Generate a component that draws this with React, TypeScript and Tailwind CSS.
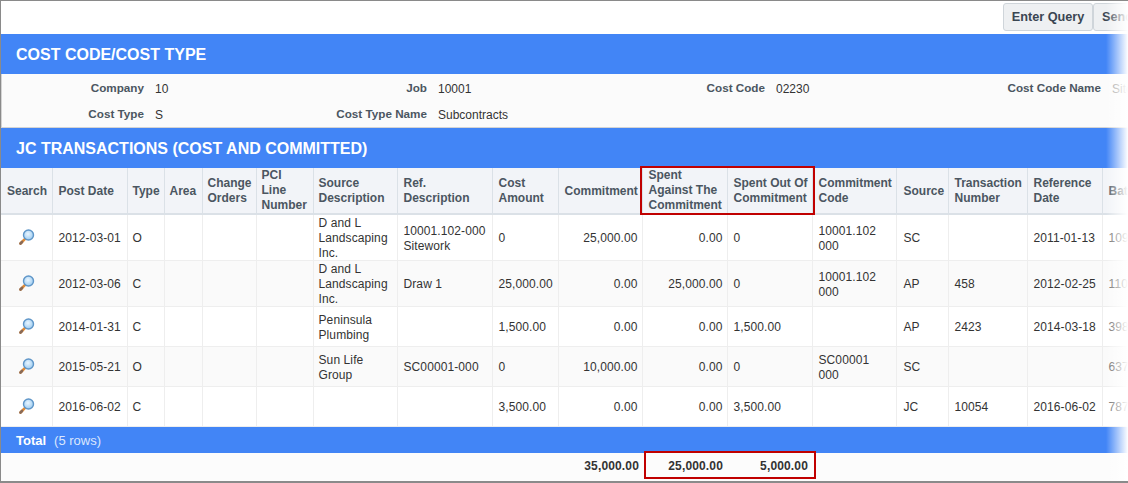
import React from "react";

const widths = [51, 75, 37, 38, 54, 57, 84, 95, 66, 84, 85, 85, 84, 52, 79, 75, 60];

const Lens = () => (
  <svg width="18" height="18" viewBox="0 0 18 18" className="mx-auto -mt-[2px] block">
    <defs>
      <radialGradient id="lensFill" cx="0.45" cy="0.4" r="0.7">
        <stop offset="0" stopColor="#eaf6ff" />
        <stop offset="1" stopColor="#8fc4ee" />
      </radialGradient>
    </defs>
    <path d="M2.5 15.5 L6.8 11.2" stroke="#e08a35" strokeWidth="2.6" strokeLinecap="round" />
    <path d="M2.5 15.5 L4 14" stroke="#8a6a55" strokeWidth="2.6" strokeLinecap="round" />
    <circle cx="10.5" cy="7" r="5" fill="url(#lensFill)" stroke="#5f96c8" strokeWidth="1.4" />
  </svg>
);

const rows: string[][] = [
  ["2012-03-01", "O", "", "", "", "D and L Landscaping Inc.", "10001.102-000 Sitework", "0", "25,000.00", "0.00", "0", "10001.102 000", "SC", "", "2011-01-13", "109"],
  ["2012-03-06", "C", "", "", "", "D and L Landscaping Inc.", "Draw 1", "25,000.00", "0.00", "25,000.00", "0", "10001.102 000", "AP", "458", "2012-02-25", "110"],
  ["2014-01-31", "C", "", "", "", "Peninsula Plumbing", "", "1,500.00", "0.00", "0.00", "1,500.00", "", "AP", "2423", "2014-03-18", "398"],
  ["2015-05-21", "O", "", "", "", "Sun Life Group", "SC00001-000", "0", "10,000.00", "0.00", "0", "SC00001 000", "SC", "", "", "637"],
  ["2016-06-02", "C", "", "", "", "", "", "3,500.00", "0.00", "0.00", "3,500.00", "", "JC", "10054", "2016-06-02", "787"],
];

const heads = [
  "Search", "Post Date", "Type", "Area", "Change Orders", "PCI Line Number", "Source Description", "Ref. Description",
  "Cost Amount", "Commitment", "Spent Against The Commitment", "Spent Out Of Commitment", "Commitment Code", "Source",
  "Transaction Number", "Reference Date", "Batch",
];

const singleLine = ["Search", "Post Date", "Type", "Area", "Commitment", "Source", "Batch"];

const Label = ({ children }: { children: React.ReactNode }) => (
  <div className="text-right text-[11.7px] font-bold text-[#4b5661] whitespace-nowrap">{children}</div>
);

const Value = ({ children, muted }: { children: React.ReactNode; muted?: boolean }) => (
  <div className={`pt-[2px] ${muted ? "text-[#999]" : ""}`}>{children}</div>
);

const SectionBar = ({ children }: { children: React.ReactNode }) => (
  <div className="h-10 bg-[#4285f6] pl-[15px] flex items-center text-[16px] font-bold text-white">{children}</div>
);

const cellPad = (i: number) => {
  if (i === 8 || i === 9) return "pl-[5px] pr-[4px] text-right";
  if (i === 11) return "pl-[6px] pr-[14px] text-left";
  if (i === 12) return "pl-[7px] pr-[3px] text-left";
  if (i === 0) return "pl-[6px] pr-[4px] text-left";
  if (i >= 6) return "pl-[6px] pr-[4px] text-left";
  return "px-[5px] text-left";
};

export default function App() {
  return (
    <div className="relative w-[1128px] h-[483px] overflow-hidden bg-white border-t border-b-2 border-l border-[#8a8a8a] font-['Liberation_Sans',Arial,sans-serif] text-[12px] leading-[15px] text-[#333]">
      <div className="h-[33px] flex pt-[2px] pl-[1002px]">
        <button className="h-7 w-[90px] shrink-0 rounded-[3px] border border-[#cfd5da] bg-[#eef0f2] text-[12.7px] font-bold text-[#3a4652]">Enter Query</button>
        <button className="h-7 w-[90px] shrink-0 rounded-[3px] border border-[#cfd5da] bg-[#eef0f2] pl-[8px] text-left text-[12.7px] font-bold text-[#3a4652]">Send</button>
      </div>
      <SectionBar>COST CODE/COST TYPE</SectionBar>
      <div className="h-[54px] bg-[#fbfbfb] border-b border-l border-[#d4d4d4] grid grid-cols-[142px_161px_100px_158px_158px_124px_190px_40px] gap-x-[11px] content-start pt-[6px] auto-rows-[26px] whitespace-nowrap">
        <Label>Company</Label><Value>10</Value>
        <Label>Job</Label><Value>10001</Value>
        <Label>Cost Code</Label><Value>02230</Value>
        <Label>Cost Code Name</Label><Value muted>Sitework</Value>
        <Label>Cost Type</Label><Value>S</Value>
        <Label>Cost Type Name</Label><Value>Subcontracts</Value>
      </div>
      <SectionBar>JC TRANSACTIONS (COST AND COMMITTED)</SectionBar>
      <table className="table-fixed border-collapse w-[1161px]">
        <colgroup>
          {widths.map((w, i) => (
            <col key={i} style={{ width: w }} />
          ))}
        </colgroup>
        <thead>
          <tr className="h-[45px]">
            {heads.map((h, i) => (
              <th
                key={h}
                className={`bg-[#f2f4f8] border-r border-b-2 border-[#dbe1e7] py-0 text-left font-bold text-[#4b5661] align-middle ${i < 2 ? "pl-[6px] pr-[5px] whitespace-nowrap" : i === 13 ? "pl-[7px] pr-[3px]" : i >= 7 ? "pl-[6px] pr-[4px]" : "px-[5px]"}`}
              >
                <div className={singleLine.includes(h) ? "mt-[1px] -mb-[1px]" : ""}>{h}</div>
              </th>
            ))}
          </tr>
        </thead>
        <tbody>
          {rows.map((r, ri) => (
            <tr key={ri} className={`h-10 ${ri % 2 ? "bg-[#fafafa]" : "bg-white"}`}>
              <td className="border-r border-b border-[#eeeeee] pl-[1px] pr-0 py-0 align-middle"><Lens /></td>
              {r.map((c, i) => (
                <td
                  key={i}
                  className={`border-r border-b border-[#eeeeee] py-0 align-middle tracking-[0.1px] ${cellPad(i)} ${i === 15 ? "text-[#666]" : ""}`}
                >
                  <div className="mt-[1px] -mb-[1px]">{c}</div>
                </td>
              ))}
            </tr>
          ))}
          <tr className="h-[26px] bg-[#4285f6] text-[13px] text-white">
            <td colSpan={17} className="pl-[15px] pt-[1px] pb-0">
              <span className="font-bold">Total</span>
              <span className="ml-[8px] text-[#dbe7fd]">(5 rows)</span>
            </td>
          </tr>
          <tr className="h-[28px] bg-[#fcfcfc] font-bold tracking-[0.15px]">
            <td colSpan={10} className="text-right pr-[3px] py-0">35,000.00</td>
            <td className="text-right pr-[4px] py-0">25,000.00</td>
            <td className="text-right pr-[4px] py-0">5,000.00</td>
            <td colSpan={5} />
          </tr>
        </tbody>
      </table>
      {/* highlight frames */}
      <div className="absolute left-[639px] top-[165px] w-[175px] h-[49px] border-[2px] border-[#c00000]" />
      <div className="absolute left-[643px] top-[450px] w-[172px] h-[28px] border-[2px] border-[#c00000]" />
      {/* fade at the right edge */}
      <div className="absolute right-0 top-0 bottom-0 w-[22px] bg-gradient-to-r from-transparent to-white" />
    </div>
  );
}
